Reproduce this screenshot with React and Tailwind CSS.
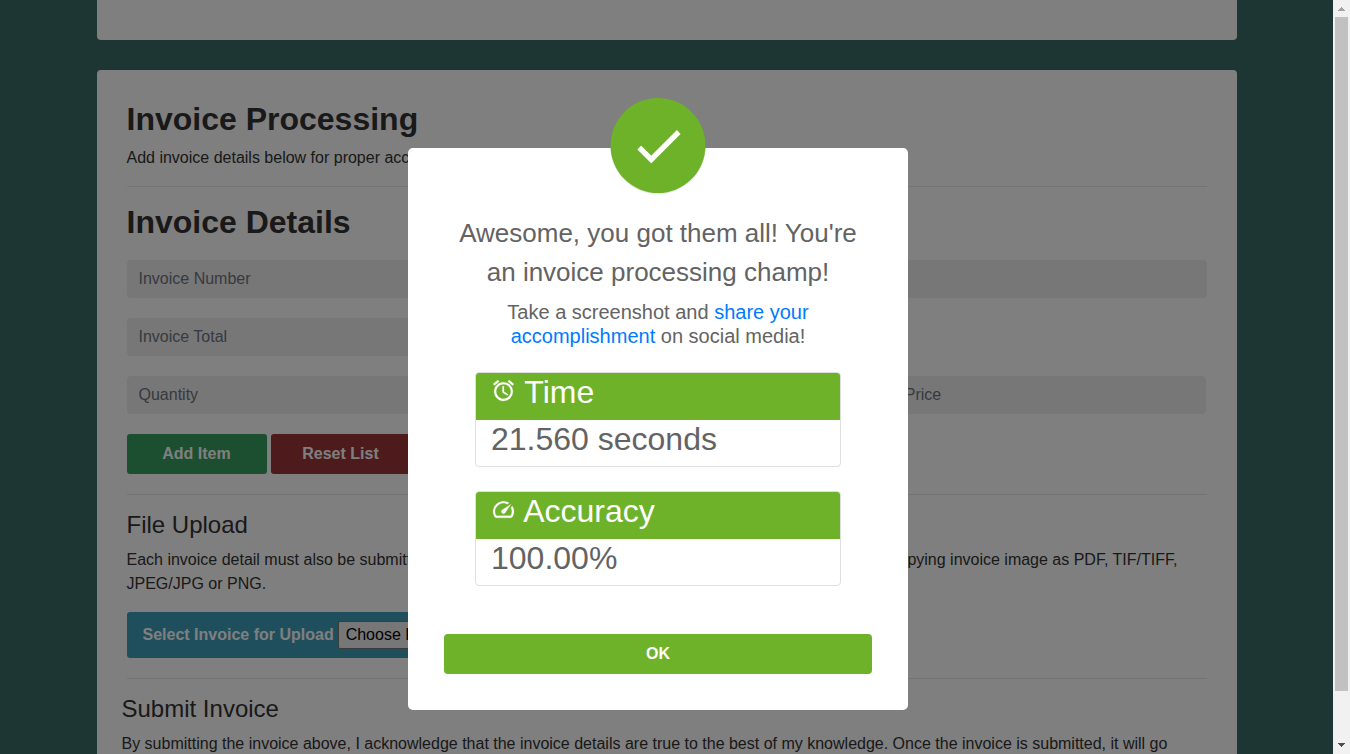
import React from "react";
import { MdAlarm, MdCheck, MdSpeed } from "react-icons/md";

const fieldClass =
  "h-[38px] w-full rounded bg-[#efefef] px-3 text-base text-[#495057] placeholder:text-[#6c757d] placeholder:opacity-100";

function Field({ label, name }) {
  return <input type="text" name={name} aria-label={label} placeholder={label} className={fieldClass} />;
}

function Divider({ className }) {
  return <hr className={`border-t border-[#e6e6e6] ${className}`} />;
}

function Stat({ icon: Icon, title, value }) {
  return (
    <section className="overflow-hidden rounded border border-[#dfdfdf] text-[32px]">
      <h3 className="bg-[#6eb229] px-[15px] pb-2 leading-[39px] text-white">
        <Icon
          className="inline align-baseline [&>path[fill=none]]:stroke-none"
          size={25}
          strokeWidth="0.2"
          aria-hidden="true"
        />{" "}
        {title}
      </h3>
      <p className="px-[15px] pb-2 leading-[38px]">{value}</p>
    </section>
  );
}

function Scrollbar() {
  return (
    <div className="flex w-[17px] shrink-0 flex-col items-center bg-[#f1f1f1]" aria-hidden="true">
      <svg width="17" height="17" viewBox="0 0 17 17" shapeRendering="crispEdges">
        <path d="M8 7h1v1h1v1h1v1h1v1H5v-1h1V9h1V8h1z" fill="#a3a3a3" />
      </svg>
      <div className="w-[13px] grow-[674] bg-[#c1c1c1]" />
      <div className="grow-[46]" />
      <svg width="17" height="17" viewBox="0 0 17 17" shapeRendering="crispEdges">
        <path d="M5 6h7v1h-1v1h-1v1H9v1H8V9H7V8H6V7H5z" fill="#505050" />
      </svg>
    </div>
  );
}

function InvoicePage() {
  return (
    <main className="mx-auto w-full max-w-[1140px]">
      <div className="h-10 rounded-b bg-white" />
      <div className="mt-[30px] rounded bg-white p-[30px]">
        <h1 className="mb-2 text-[32px] leading-[38px] font-bold text-[#333]">Invoice Processing</h1>
        <p>Add invoice details below for proper accounting.</p>
        <Divider className="my-4" />

        <form>
          <h2 className="mb-[19px] text-[32px] leading-[38px] font-bold text-[#333]">Invoice Details</h2>
          <div className="flex flex-col gap-5">
            <div className="grid grid-cols-2 gap-5">
              <Field label="Invoice Number" name="number" />
              <Field label="Invoice Date" name="date" />
            </div>
            <div className="grid grid-cols-2 gap-5">
              <Field label="Invoice Total" name="total" />
            </div>
            <div className="grid grid-cols-3 gap-5">
              <Field label="Quantity" name="quantity" />
              <Field label="Item" name="item" />
              <Field label="Unit Price" name="price" />
            </div>
            <div className="flex gap-1">
              <button type="button" className="h-10 w-[140px] rounded-[3px] bg-[#389c60] font-bold text-white">
                Add Item
              </button>
              <button type="button" className="h-10 w-[140px] rounded-[3px] bg-[#9a3636] font-bold text-white">
                Reset List
              </button>
            </div>
          </div>
          <Divider className="mt-5 mb-4" />

          <h4 className="mb-[10px] text-2xl leading-[27px]">File Upload</h4>
          <p>
            Each invoice detail must also be submitted to the system. Please be sure to upload an original file saved
            by copying invoice image as PDF, TIF/TIFF, JPEG/JPG or PNG.
          </p>
          <div className="mt-4 flex h-[46px] w-fit items-center gap-1 rounded-[3px] bg-[#3e9cb8] px-4 font-bold text-white">
            <label htmlFor="invoice-file">Select Invoice for Upload</label>
            <input
              id="invoice-file"
              type="file"
              className="w-[260px] font-normal file:h-7 file:rounded-[2px] file:border file:border-[#767676] file:bg-[#efefef] file:px-[7px] file:text-black"
            />
          </div>
          <Divider className="mt-5 mb-4" />

          <div className="-mx-[5px]">
            <h4 className="mb-[10px] text-2xl leading-[27px]">Submit Invoice</h4>
            <p>
              By submitting the invoice above, I acknowledge that the invoice details are true to the best of my
              knowledge. Once the invoice is submitted, it will go
            </p>
          </div>
        </form>
      </div>
    </main>
  );
}

function ResultDialog() {
  return (
    <div className="absolute inset-0 flex items-start justify-center overflow-hidden bg-black/50 pt-[148px] pr-[17px]">
      <div
        role="dialog"
        aria-modal="true"
        aria-labelledby="result-title"
        className="relative w-full max-w-[500px] rounded-[5px] bg-white px-9 pt-[66px] pb-9 text-[#636363]"
      >
        <div className="absolute -top-[50px] left-1/2 flex size-[95px] -translate-x-1/2 items-center justify-center rounded-full bg-[#6eb229] shadow-[0_1px_1px_rgba(0,0,0,0.1)]">
          <MdCheck
            size={58}
            strokeWidth="0.3"
            className="text-white [&>path[fill=none]]:stroke-none"
            aria-hidden="true"
          />
        </div>
        <h2 id="result-title" className="text-center text-[26px] leading-[39px]">
          Awesome, you got them all! You're an invoice processing champ!
        </h2>
        <div className="mt-2 px-[31px]">
          <p className="text-center text-xl leading-6">
            Take a screenshot and{" "}
            <a href="#share" className="text-[#007bff]">
              share your accomplishment
            </a>{" "}
            on social media!
          </p>
          <div className="mt-6 flex flex-col gap-6">
            <Stat icon={MdAlarm} title="Time" value="21.560 seconds" />
            <Stat icon={MdSpeed} title="Accuracy" value="100.00%" />
          </div>
        </div>
        <button type="button" className="mt-12 h-10 w-full rounded bg-[#6eb229] font-bold text-white">
          OK
        </button>
      </div>
    </div>
  );
}

export default function App() {
  return (
    <div className="flex h-screen font-['Liberation_Sans',Arial,sans-serif] text-base text-[#333]">
      <div className="relative min-w-0 flex-1 overflow-hidden bg-[#3a6c66]">
        <InvoicePage />
        <ResultDialog />
      </div>
      <Scrollbar />
    </div>
  );
}
